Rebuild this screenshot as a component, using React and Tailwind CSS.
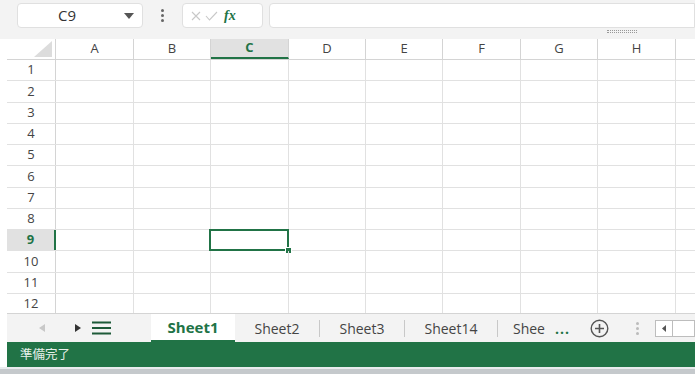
import React from 'react';

const cols = [
  { k: 'A', w: 78 },
  { k: 'B', w: 77 },
  { k: 'C', w: 78 },
  { k: 'D', w: 77 },
  { k: 'E', w: 77 },
  { k: 'F', w: 78 },
  { k: 'G', w: 77 },
  { k: 'H', w: 78 },
  { k: 'I', w: 60 },
];
const rows = [1, 2, 3, 4, 5, 6, 7, 8, 9, 10, 11, 12];

export default function App() {
  return (
    <div className="w-[695px] h-[374px] bg-white overflow-hidden flex flex-col" style={{ fontFamily: '"Open Sans", "Noto Sans CJK JP", sans-serif' }}>
      {/* formula bar */}
      <div className="h-[39px] shrink-0 bg-[#f3f3f3] relative">
        <div className="flex items-center pt-[3px]">
          <div className="ml-[17px] w-[126px] h-[25px] bg-white border border-[#e0e0e0] rounded-[4px] flex items-center">
            <span className="ml-[40px] text-[15px] text-[#333]">C9</span>
            <svg width="10" height="6" viewBox="0 0 10 6" className="ml-auto mr-[8px]"><path d="M0 0h10L5 6z" fill="#555" /></svg>
          </div>
          <div className="w-[39px] flex flex-col items-center gap-[2px]">
            <span className="w-[3px] h-[3px] rounded-full bg-[#666]" />
            <span className="w-[3px] h-[3px] rounded-full bg-[#666]" />
            <span className="w-[3px] h-[3px] rounded-full bg-[#666]" />
          </div>
          <div className="w-[81px] h-[25px] bg-white border border-[#e0e0e0] rounded-[4px] flex items-center pl-[8px] gap-[4px]">
            <svg width="10" height="10" viewBox="0 0 10 10"><path d="M1 1l8 8M9 1l-8 8" stroke="#c8c8c8" strokeWidth="1.1" /></svg>
            <svg width="13" height="10" viewBox="0 0 13 10"><path d="M1 5l3.5 4L12 1" stroke="#c8c8c8" strokeWidth="1.1" fill="none" /></svg>
            <span className="ml-[2px] text-[14px] italic font-semibold text-[#217346]" style={{ fontFamily: '"Liberation Serif", serif' }}>fx</span>
          </div>
          <div className="ml-[6px] flex-1 h-[25px] bg-white border border-[#e0e0e0] rounded-l-[4px]" />
        </div>
        <div className="absolute left-[607px] top-[30px] w-[30px] h-[3px] border-y border-dotted border-[#999]" />
      </div>

      {/* grid */}
      <div className="flex-1 overflow-hidden pl-[7px]">
        <div className="flex h-[21px] border-b border-[#d4d4d4]">
          <div className="w-[49px] shrink-0 border-r border-[#d4d4d4] relative">
            <svg width="18" height="16" viewBox="0 0 18 16" className="absolute right-[3px] bottom-[2px]"><path d="M18 0V16H0z" fill="#dcdcdc" /></svg>
          </div>
          {cols.map((c) =>
            c.k === 'C' ? (
              <div key={c.k} style={{ width: c.w }} className="shrink-0 bg-[#e1e1e1] border-r border-[#d4d4d4] border-b-2 border-b-[#217346] flex items-center justify-center text-[13px] font-bold text-[#217346]">{c.k}</div>
            ) : (
              <div key={c.k} style={{ width: c.w }} className="shrink-0 border-r border-[#d4d4d4] flex items-center justify-center text-[13px] text-[#444]">{c.k}</div>
            )
          )}
        </div>
        {rows.map((r) => (
          <div key={r} className="flex h-[21.25px] border-b border-[#e1e1e1]">
            {r === 9 ? (
              <div className="w-[49px] shrink-0 bg-[#e1e1e1] border-r-2 border-[#217346] flex items-center justify-center text-[13px] font-bold text-[#217346]">{r}</div>
            ) : (
              <div className="w-[49px] shrink-0 border-r border-[#d4d4d4] flex items-center justify-center text-[13px] text-[#444]">{r}</div>
            )}
            {cols.map((c) => (
              <div key={c.k} style={{ width: c.w }} className="shrink-0 border-r border-[#e1e1e1] relative">
                {r === 9 && c.k === 'C' && (
                  <div className="absolute -left-[2px] -top-[1px] -right-[1px] -bottom-[1px] border-2 border-[#217346]">
                    <div className="absolute -right-[5px] -bottom-[5px] w-[7px] h-[7px] bg-[#217346] border border-white" />
                  </div>
                )}
              </div>
            ))}
          </div>
        ))}
      </div>

      {/* sheet tabs */}
      <div className="h-[29px] shrink-0 ml-[7px] bg-[#f3f3f3] border-t border-[#d4d4d4] flex items-center text-[14px] text-[#444]">
        <svg width="6" height="8" viewBox="0 0 6 8" className="ml-[32px]"><path d="M6 0v8L0 4z" fill="#c8c8c8" /></svg>
        <svg width="6" height="8" viewBox="0 0 6 8" className="ml-[30px]"><path d="M0 0v8l6-4z" fill="#333" /></svg>
        <svg width="19" height="14" viewBox="0 0 19 14" className="ml-[11px]"><path d="M0 1.5h19M0 7h19M0 12.5h19" stroke="#1d5a38" strokeWidth="2" /></svg>
        <div className="ml-[40px] w-[84px] h-full bg-white border-b-2 border-[#217346] flex items-center justify-center font-bold text-[#217346] text-[15px]">Sheet1</div>
        <div className="w-[85px] h-[17px] border-r border-[#c8c8c8] flex items-center justify-center">Sheet2</div>
        <div className="w-[85px] h-[17px] border-r border-[#c8c8c8] flex items-center justify-center">Sheet3</div>
        <div className="w-[93px] h-[17px] border-r border-[#c8c8c8] flex items-center justify-center">Sheet14</div>
        <div className="w-[32px] ml-[15px] overflow-hidden whitespace-nowrap">Sheet5</div>
        <span className="ml-[10px] font-bold text-[#217346] tracking-[1px]">...</span>
        <svg width="19" height="19" viewBox="0 0 19 19" className="ml-[20px]"><circle cx="9.5" cy="9.5" r="8.3" stroke="#555" strokeWidth="1.4" fill="none" /><path d="M9.5 5v9M5 9.5h9" stroke="#555" strokeWidth="1.6" /></svg>
        <div className="ml-[27px] flex flex-col gap-[2px]">
          <span className="w-[3px] h-[3px] rounded-full bg-[#bbb]" />
          <span className="w-[3px] h-[3px] rounded-full bg-[#bbb]" />
          <span className="w-[3px] h-[3px] rounded-full bg-[#bbb]" />
        </div>
        <div className="ml-[16px] flex-1 h-[17px] bg-white border border-[#bdbdbd] flex">
          <div className="w-[17px] border-r border-[#bdbdbd] flex items-center justify-center">
            <svg width="4" height="7" viewBox="0 0 4 7"><path d="M4 0v7L0 3.5z" fill="#555" /></svg>
          </div>
        </div>
      </div>

      {/* status bar */}
      <div className="h-[25px] shrink-0 ml-[7px] bg-[#217346] flex items-center pl-[13px] text-[12.5px] text-[#e8f0ea]" style={{ fontFamily: '"Noto Sans CJK JP", sans-serif' }}>準備完了</div>
      <div className="h-[7px] shrink-0 bg-[#c5c9cc] border-t-2 border-[#e9ecee]" />
    </div>
  );
}
